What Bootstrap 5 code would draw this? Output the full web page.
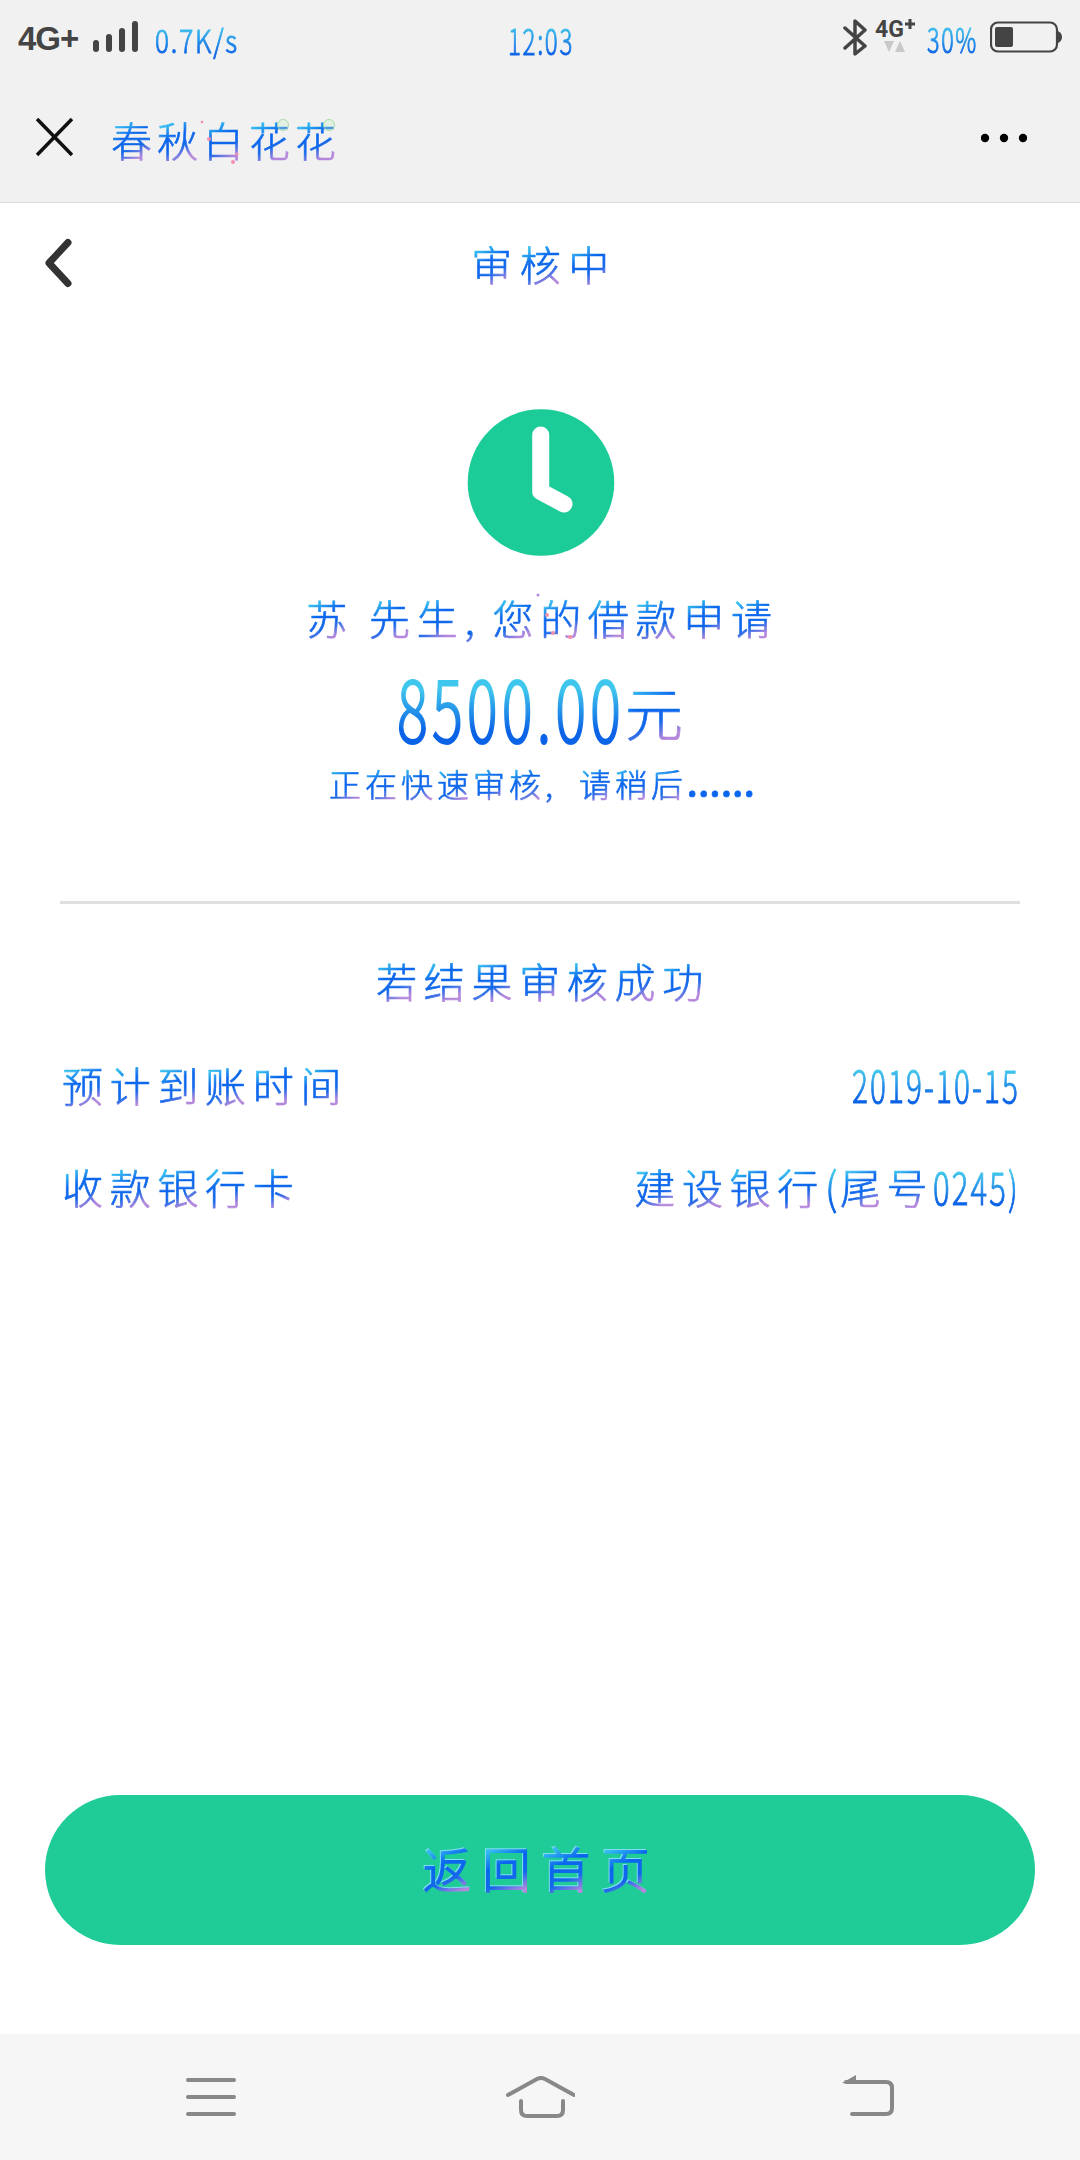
<!DOCTYPE html>
<html lang="zh-CN">
<head>
<meta charset="utf-8">
<meta name="viewport" content="width=device-width, initial-scale=1">
<title>审核中</title>
<link href="https://cdn.jsdelivr.net/npm/bootstrap@5.3.0/dist/css/bootstrap.min.css" rel="stylesheet">
<style>
  body { width: 1080px; height: 2160px; background: #fff; overflow: hidden; font-family: "Noto Sans CJK SC", sans-serif; color: #0a66ee; }
  svg { display: block; flex: none; }
  .top-area { height: 203px; background: #f1f1f1; border-bottom: 1px solid #dcdcdc; }
  .status-row { height: 78px; padding: 0 18px; }
  .title-row { height: 122px; padding: 0 53px 0 36px; }
  .net-label { font: 500 36px/40px "Liberation Sans", sans-serif; font-weight: 700; letter-spacing: -1px; font-size: 33px; color: #444; width: 75px; white-space: nowrap; }
  /* Chinese text: the gradient tile repeats once for each character */
  .han { --fs: 41px; --pitch: 47.7px; font-size: var(--fs); letter-spacing: calc(var(--pitch) - var(--fs)); font-weight: 300; line-height: 60px; white-space: pre;
    background: linear-gradient(155deg, #35bdf0 25%, #0a66ee 43%, #1268ea 60%, #b587dc 76%) 0 0 / var(--pitch) 60px; -webkit-background-clip: text; background-clip: text; color: transparent; -webkit-text-stroke: .7px transparent; }
  /* narrow figures: drawn at natural width, then squeezed into the width of the box */
  .fig { display: inline-block; white-space: pre; transform-origin: 0 50%; font-family: "Noto Sans CJK SC", sans-serif; font-weight: 300; letter-spacing: .07em; line-height: 60px;
    background: linear-gradient(#3fc6ec 28%, #0a62e6 75%); -webkit-background-clip: text; background-clip: text; color: transparent; -webkit-text-stroke: 1px transparent; }
  .page-head { height: 120px; padding: 0 45px 0 53px; }
  .result { height: 578px; padding: 86px 0 0 2px; }
  .line-name { margin-top: 30px; height: 60px; padding-left: 3px; }
  .line-amount { margin-top: 17px; height: 90px; }
  .line-amount .fig { font-size: 85px; line-height: 84px; height: 90px; -webkit-text-stroke: 2px transparent; }
  .line-wait { margin-top: -1px; height: 60px; padding-left: 2px; }
  .dots { letter-spacing: 1px; font-weight: 700; width: 68px; background: #0a66ee; -webkit-background-clip: text; background-clip: text; }
  .rule { height: 3px; margin: 0 60px; background: #dfdfdf; }
  .detail { height: 891px; padding: 46px 60px 0 62px; }
  .detail .fig { line-height: 60px; height: 60px; font-size: 44px; }
  .back-btn { width: 990px; height: 150px; background: #1fcc97; border: 0; }
  .back-btn .han { --fs: 48px; --pitch: 59.5px; line-height: 80px; background-size: 59.5px 80px; margin: 0 0 6px 4px; -webkit-text-stroke: 1.6px transparent; filter: drop-shadow(-1px -1px 0 #7fdcf2); }
  .nav-area { height: 126px; background: #f6f6f6; padding: 0 185px; margin-top: 89px; }
</style>
</head>
<body class="d-flex flex-column">
<header class="top-area">
  <div class="status-row d-flex align-items-center position-relative">
    <span class="net-label">4G+</span>
    <svg width="46" height="36" viewBox="0 0 46 36" stroke="#444" stroke-width="6" stroke-linecap="round"><path d="M3 22V28M16 16V28M29 10V28M42 3V28"/></svg>
    <span class="fig" style="margin-left:16px;font-size:32px;width:84px">0.7K/s</span>
    <span class="fig position-absolute" style="left:508px;font-size:36px;width:66px">12:03</span>
    <svg class="ms-auto" width="24" height="40" viewBox="0 0 24 40" fill="none" stroke="#444" stroke-width="3.5" stroke-linejoin="round" stroke-linecap="round"><path d="M2 9L22 27L12 35V2L22 11L2 29"/></svg>
    <svg style="margin-left:7px" width="42" height="42" viewBox="0 0 42 42"><text x="1" y="19" font-family="Roboto" font-weight="700" font-size="23" fill="#444">4G</text><path d="M36 1V11M31 6H41" stroke="#444" stroke-width="3"/><path d="M10 23H20L15 34ZM21 34L26 23L31 34Z" fill="#c8c8c8"/></svg>
    <span class="fig" style="margin-left:11px;font-size:34px;width:51px">30%</span>
    <svg style="margin-left:12px" width="72" height="36" viewBox="0 0 72 36"><rect x="1" y="1.500" width="66" height="29" rx="7" fill="none" stroke="#444" stroke-width="2.2"/><rect x="5" y="6" width="18" height="20" rx="2" fill="#444"/><path d="M68 10Q72 12 72 16T68 22Z" fill="#444"/></svg>
  </div>
  <div class="title-row d-flex align-items-center position-relative">
    <svg width="37" height="42" viewBox="0 0 37 42" stroke="#111" stroke-width="3.6"><path d="M1 1L36 37M36 1L1 37"/></svg>
    <span class="han" style="--pitch:46px;margin-left:38px">春秋白花花</span>
    <svg class="ms-auto" width="46" height="12" viewBox="0 0 46 12"><circle cx="4" cy="5" r="4.2"/><circle cx="23" cy="5" r="4.2"/><circle cx="42" cy="5" r="4.2"/></svg>
    <svg class="position-absolute" style="left:200px;top:38px" width="140" height="52" viewBox="0 0 140 52" fill="none"><circle cx="83" cy="9" r="5.500" stroke="#a8dca8" fill="#c9f2c955"/><circle cx="129" cy="9" r="5.500" stroke="#a8dca8" fill="#c9f2c955"/><g fill="#f58fb0"><circle cx="2" cy="6" r="1.300"/><circle cx="9" cy="23" r="2"/><circle cx="37" cy="38" r="1.600"/><circle cx="33" cy="46" r="2"/></g></svg>
  </div>
</header>
<div class="page-head d-flex align-items-center justify-content-center position-relative">
  <svg class="position-absolute" style="left:45px" width="28" height="50" viewBox="0 0 28 50" fill="none" stroke="#333" stroke-width="7" stroke-linecap="round" stroke-linejoin="round"><path d="M23 4.500L4 25L23 45.500"/></svg>
  <span class="han" style="--pitch:48.500px">审核中</span>
</div>
<main class="result d-flex flex-column align-items-center">
  <svg width="148" height="148" viewBox="467 409 148 148"><circle cx="541" cy="482.500" r="73.300" fill="#1bcc98"/><path d="M540.700 435V491.500L564 504" fill="none" stroke="#fff" stroke-width="17" stroke-linecap="round" stroke-linejoin="round"/></svg>
  <div class="line-name d-flex position-relative"><span class="han">苏</span><span class="han" style="margin-left:15px">先生</span><span class="han" style="width:28px">,</span><span class="han">您的借款申请</span>
    <svg class="position-absolute" style="left:232px;top:4px" width="60" height="52" viewBox="0 0 60 52" fill="#f58fa8"><circle cx="3" cy="4" r="1.500" fill="#b587dc"/><circle cx="12" cy="24" r="2"/><circle cx="18" cy="42" r="2"/><circle cx="35" cy="46" r="2"/></svg>
  </div>
  <div class="line-amount d-flex"><span class="fig" style="width:228px">8500.00</span><span class="han" style="--fs:58px;--pitch:60px;line-height:94px;background-size:60px 94px">元</span></div>
  <div class="line-wait d-flex"><span class="han" style="--fs:32px;--pitch:36px">正在快速审核</span><span class="han" style="--fs:32px;--pitch:36px;width:34px">,</span><span class="han" style="--fs:32px;--pitch:36px">请稍后</span><span class="han dots" style="--fs:32px">......</span></div>
</main>
<div class="rule"></div>
<section class="detail">
  <div class="d-flex justify-content-center"><span class="han ps-1">若结果审核成功</span></div>
  <div class="d-flex justify-content-between" style="margin-top:44px"><span class="han">预计到账时间</span><span class="fig" style="width:168px">2019-10-15</span></div>
  <div class="d-flex justify-content-between" style="margin-top:42px"><span class="han">收款银行卡</span><div class="d-flex"><span class="han">建设银行</span><span class="fig" style="width:15px">(</span><span class="han" style="--pitch:46.500px">尾号</span><span class="fig" style="width:87px">0245)</span></div></div>
</section>
<div class="d-flex justify-content-center"><button class="btn back-btn rounded-pill d-flex align-items-center justify-content-center p-0"><span class="han">返回首页</span></button></div>
<nav class="nav-area d-flex align-items-center justify-content-between">
  <svg width="52" height="46" viewBox="0 0 52 46" stroke="#888" stroke-width="4" stroke-linecap="round"><path d="M3 6H49M3 23H49M3 40H49"/></svg>
  <svg width="72" height="48" viewBox="0 0 72 48" fill="none" stroke="#888" stroke-width="4" stroke-linecap="round"><path d="M5 22L34 6Q38 4 42 6L71 22M18 28V37Q18 43 24 43H54Q60 43 60 37V28"/></svg>
  <svg width="54" height="46" viewBox="0 0 54 46" fill="none" stroke="#888" stroke-width="4" stroke-linecap="round"><path d="M5 8H45Q51 8 51 14V34Q51 40 45 40H11"/><path d="M1 9L15 1V10Z" fill="#888" stroke="none"/></svg>
</nav>
<script src="https://cdn.jsdelivr.net/npm/bootstrap@5.3.0/dist/js/bootstrap.bundle.min.js"></script>
<script>
  // Squeeze each figure string into the width its box reserves for it
  document.querySelectorAll('.fig').forEach(function (el) {
    var want = parseFloat(el.style.width);
    el.style.width = 'max-content';
    el.style.flex = 'none';
    var natural = el.getBoundingClientRect().width;
    el.style.transform = 'scaleX(' + (want / natural) + ')';
    el.style.marginRight = (want - natural) + 'px';
  });
</script>
</body>
</html>
